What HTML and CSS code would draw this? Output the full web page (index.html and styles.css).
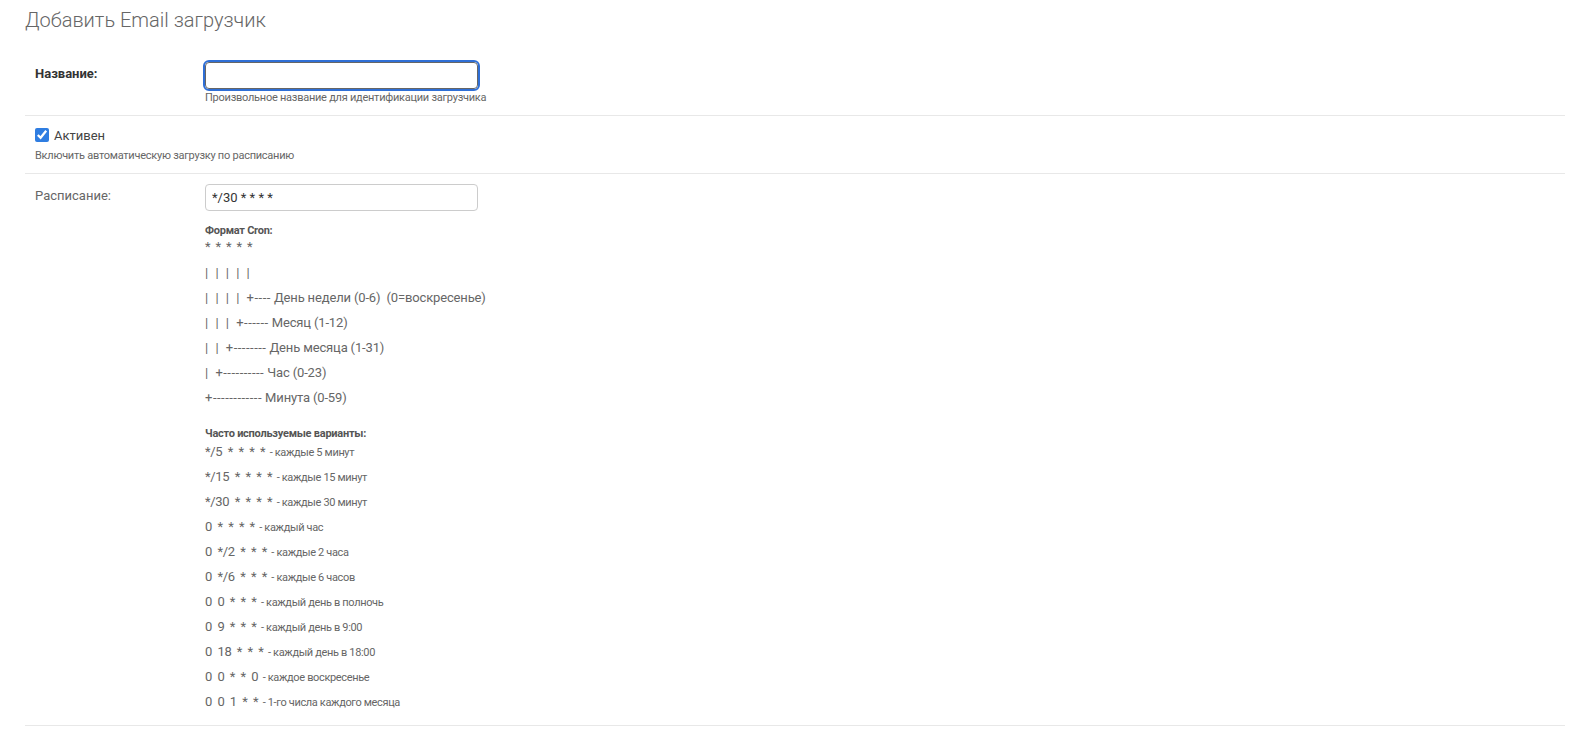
FILE: index.html
```html
<!DOCTYPE html>
<html lang="ru">

<head>
    <meta charset="UTF-8">
    <meta name="viewport" content="width=device-width, initial-scale=1.0">
    <title>Добавить Email загрузчик</title>
    <link rel="stylesheet" href="styles.css">
</head>

<body>
    <div class="page">
        <h1 class="page-title">Добавить Email загрузчик</h1>

        <form class="loader-form">
            <!-- Название -->
            <div class="form-row">
                <div class="field-line">
                    <label class="field-label required" for="id_name">Название:</label>
                    <input type="text" id="id_name" class="text-input is-focused">
                </div>
                <div class="help help-indented">Произвольное название для идентификации загрузчика</div>
            </div>

            <!-- Активен -->
            <div class="form-row">
                <div class="check-line">
                    <input type="checkbox" id="id_is_active" checked>
                    <label for="id_is_active">Активен</label>
                </div>
                <div class="help check-help">Включить автоматическую загрузку по расписанию</div>
            </div>

            <!-- Расписание -->
            <div class="form-row">
                <div class="field-line">
                    <label class="field-label" for="id_schedule">Расписание:</label>
                    <div class="field-body">
                        <input type="text" id="id_schedule" class="text-input" value="*/30 * * * *">
                        <div class="help cron-help">
                            <div class="help-heading">Формат Cron:</div>
                            <code class="cron-line cron-stars">* * * * *</code>
                            <code class="cron-line cron-gap"><span class="cron-tree">| | | | |</span></code>
                            <code class="cron-line"><span class="cron-tree">| | | | +----</span> День недели (0-6)&nbsp; (0=воскресенье)</code>
                            <code class="cron-line"><span class="cron-tree">| | | +------</span> Месяц (1-12)</code>
                            <code class="cron-line"><span class="cron-tree">| | +--------</span> День месяца (1-31)</code>
                            <code class="cron-line"><span class="cron-tree">| +----------</span> Час (0-23)</code>
                            <code class="cron-line"><span class="cron-tree">+------------</span> Минута (0-59)</code>

                            <div class="help-heading second">Часто используемые варианты:</div>
                            <div class="variant"><code>*/5 * * * *</code> - каждые 5 минут</div>
                            <div class="variant"><code>*/15 * * * *</code> - каждые 15 минут</div>
                            <div class="variant"><code>*/30 * * * *</code> - каждые 30 минут</div>
                            <div class="variant"><code>0 * * * *</code> - каждый час</div>
                            <div class="variant"><code>0 */2 * * *</code> - каждые 2 часа</div>
                            <div class="variant"><code>0 */6 * * *</code> - каждые 6 часов</div>
                            <div class="variant"><code>0 0 * * *</code> - каждый день в полночь</div>
                            <div class="variant"><code>0 9 * * *</code> - каждый день в 9:00</div>
                            <div class="variant"><code>0 18 * * *</code> - каждый день в 18:00</div>
                            <div class="variant"><code>0 0 * * 0</code> - каждое воскресенье</div>
                            <div class="variant"><code>0 0 1 * *</code> - 1-го числа каждого месяца</div>
                        </div>
                    </div>
                </div>
            </div>
        </form>
    </div>
</body>

</html>
```

FILE: styles.css
```css
body {
    margin: 0;
    font-family: Roboto, "Noto Sans", sans-serif;
    font-size: 13px;
    color: #333;
    background-color: #ffffff;
}

.page {
    padding: 0 5px 0 25px;
}

.page-title {
    margin: 8px 0 20px;
    font-size: 20px;
    font-weight: 300;
    line-height: 24px;
    color: #666;
}

.form-row {
    padding: 10px;
    border-bottom: 1px solid #e8e8e8;
}

.field-line {
    display: flex;
    align-items: flex-start;
}

.field-label {
    flex: none;
    width: 170px;
    padding-top: 3px;
    line-height: 17px;
    color: #666;
}

.field-label.required {
    font-weight: 700;
    color: #333;
}

.text-input {
    display: block;
    width: 273px;
    height: 27px;
    box-sizing: border-box;
    margin: 0;
    padding: 5px 6px;
    border: 1px solid #ccc;
    border-radius: 4px;
    font-family: inherit;
    font-size: 13px;
    color: #333;
    background: #fff;
}

.text-input.is-focused {
    border-color: #666;
    outline: 2px solid #2f6fd6;
    outline-offset: 0;
}

.help {
    font-size: 11px;
    line-height: 14px;
    letter-spacing: -0.25px;
    color: #666;
}

.help-indented {
    margin: 2px 0 0 170px;
}

.check-line {
    display: flex;
    align-items: center;
    gap: 5px;
    height: 18px;
    color: #444;
}

.check-line input {
    width: 14px;
    height: 14px;
    margin: 0;
    accent-color: #2f7de1;
}

.check-help {
    margin-top: 5px;
}

.cron-help {
    margin-top: 12px;
    padding-bottom: 5px;
}

.help-heading {
    font-weight: 700;
    line-height: 16px;
    color: #555;
}

.help-heading.second {
    margin-top: 20px;
}

.cron-line,
.variant code {
    font-family: inherit;
    font-size: 13px;
    letter-spacing: -0.15px;
    color: #666;
}

.cron-line {
    display: block;
    height: 16px;
    line-height: 16px;
}

.cron-line.cron-stars {
    word-spacing: 2px;
}

.cron-tree {
    letter-spacing: 0.5px;
    word-spacing: 3px;
}

.cron-line + .cron-line {
    margin-top: 9px;
}

.cron-line.cron-gap {
    margin-top: 10px;
}

.variant {
    height: 16px;
    line-height: 16px;
    margin-top: 9px;
    letter-spacing: -0.35px;
}

.variant code {
    margin-right: 2px;
    letter-spacing: -0.3px;
    word-spacing: 2.5px;
}

.help-heading + .variant {
    margin-top: 2px;
}
```
